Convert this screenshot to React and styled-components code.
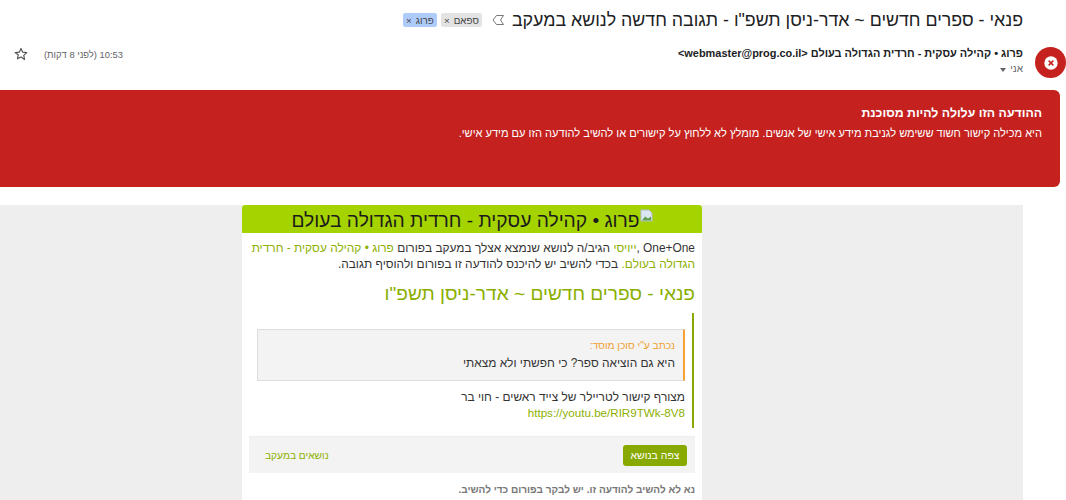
import React from "react";
import styled, { createGlobalStyle } from "styled-components";

const Global = createGlobalStyle`
  html, body { margin: 0; padding: 0; background: #fff; }
  body { font-family: "Liberation Sans", Arial, sans-serif; }
  #root { width: 1066px; height: 500px; overflow: hidden; }
`;
const Page = styled.div`
  width: 1066px; height: 500px; overflow: hidden; direction: rtl; background: #fff;
`;
const SubjectRow = styled.div`
  display: flex; align-items: center; gap: 7px; height: 40px; padding-right: 43px;
`;
const Subject = styled.h1`
  margin: 0; font-size: 17.8px; font-weight: 400; color: #202124; white-space: nowrap; line-height: 24px;
`;
const Labels = styled.div`display: flex; gap: 4px; margin-right: 2px;`;
const Label = styled.span`
  display: inline-flex; align-items: center; justify-content: center; gap: 4px; height: 14px; width: ${p => p.$w}px;
  font-size: 9.8px; border-radius: 2px; color: #444; background: ${p => p.$bg};
`;
const SenderRow = styled.div`
  display: flex; align-items: flex-start; height: 50px;
  padding: 5px 0 0 0; box-sizing: border-box; gap: 12px;
`;
const Avatar = styled.div`
  width: 31px; height: 31px; border-radius: 50%; background: #c5221f; flex: none;
  display: flex; align-items: center; justify-content: center; margin-top: 2px;
`;
const SenderCol = styled.div`flex: 1;`;
const SenderName = styled.div`
  font-size: 10.95px; font-weight: 700; color: #202124; line-height: 16px; white-space: nowrap;
`;
const ToLine = styled.div`
  font-size: 10px; line-height: 14px; color: #5f6368; display: flex; align-items: center; gap: 4px; margin-top: 1px;
`;
const Caret = styled.span`
  width: 0; height: 0; border-left: 3.5px solid transparent; border-right: 3.5px solid transparent;
  border-top: 4px solid #5f6368; margin-top: 2px;
`;
const Meta = styled.div`
  display: flex; align-items: center; gap: 16px; padding: 1px 0 0 14px; height: 16px;
  font-size: 9.4px; color: #5f6368; white-space: nowrap;
`;
const Danger = styled.section`
  width: 1060px; height: 97px; box-sizing: border-box; background: #c5221f; color: #fff;
  border-top-right-radius: 6px; border-bottom-right-radius: 6px;
  padding: 14px 18px 0 0; margin-right: 6px;
`;
const DangerTitle = styled.div`font-size: 12.3px; font-weight: 700; line-height: 18px;`;
const DangerText = styled.div`font-size: 11.05px; line-height: 16px; margin-top: 3px; white-space: nowrap;`;
const Canvas = styled.div`
  width: 1023px; margin-top: 18px; margin-right: 43px; height: 295px; background: #eeeeee; padding-right: 321px; box-sizing: border-box;
`;
const Card = styled.article`
  width: 460px; background: #fff; height: 295px;
`;
const CardHead = styled.div`
  background: #a5d300; height: 28px; box-sizing: border-box; padding-top: 3px; border-radius: 3px 3px 0 0;
  display: flex; justify-content: center; align-items: center;
  font-size: 19.2px; color: #1b1b1b; white-space: nowrap;
`;
const Broken = styled.svg`flex: none; align-self: flex-start; margin-top: 1px;`;
const Intro = styled.p`
  margin: 0; padding: 7px 7px 0 5px; font-size: 11.9px; line-height: 16px; color: #333;
`;
const Link = styled.a`color: #8db000; text-decoration: none;`;
const TopicTitle = styled.h2`
  margin: 0; padding: 11px 7px 0; font-size: 19.1px; font-weight: 400; color: #8aae00; line-height: 22px;
`;
const Post = styled.div`
  margin: 8px 8px 0 0; width: 437px; border-right: 2px solid #88aa00; height: 115px; padding: 16px 7px 0 0; box-sizing: border-box;
`;
const Quote = styled.blockquote`
  margin: 0; width: 428px; height: 52px; box-sizing: border-box; background: #f3f3f3;
  border: 1px solid #ddd; border-right: 2px solid #f6a234; padding: 8px 8px 0 0;
`;
const QuoteBy = styled.div`font-size: 10.2px; line-height: 15px; color: #f0a030;`;
const QuoteText = styled.div`font-size: 11.9px; line-height: 18px; color: #333; margin-top: 1px;`;
const Body = styled.div`
  font-size: 11.9px; line-height: 16px; color: #333; margin-top: 8px;
`;
const Url = styled.a`font-size: 11.6px; color: #8db000;`;
const Footer = styled.div`
  margin: 8px 7px 0; height: 37px; background: #f3f3f3; display: flex; justify-content: space-between; align-items: center;
  padding: 0 8px 0 16px; box-sizing: border-box; border-top: 1px solid #eee;
`;
const Button = styled.button`
  border: 0; height: 21px; width: 64px; background: #88aa00; color: #fff; border-radius: 3px; font: 10.5px "Liberation Sans", sans-serif;
`;
const FooterLink = styled.a`font-size: 10.2px; color: #8db000;`;
const Note = styled.p`
  margin: 10px 7px 0; font-size: 10.05px; font-weight: 700; line-height: 14px; color: #777; white-space: nowrap;
`;

export default function App() {
  return (
    <Page>
      <Global />
      <SubjectRow>
        <Subject>פנאי - ספרים חדשים ~ אדר-ניסן תשפ"ו - תגובה חדשה לנושא במעקב</Subject>
        <svg width="14" height="12" viewBox="0 0 14 12" fill="none" stroke="#777" strokeWidth="1">
          <path d="M12.500 1.500H5.500L2 6l3.500 4.500h7L9.500 6z" />
        </svg>
        <Labels>
          <Label $w={41} $bg="#e3e3e3">ספאם <span>×</span></Label>
          <Label $w={34} $bg="#aecbfa">פרוג <span>×</span></Label>
        </Labels>
      </SubjectRow>
      <SenderRow>
        <Avatar>
          <svg width="14" height="14" viewBox="0 0 13 13">
            <circle cx="6.500" cy="6.500" r="6.200" fill="#fff" />
            <path d="M4.300 4.300l4.400 4.400M8.700 4.300l-4.400 4.400" stroke="#c5221f" strokeWidth="1.400" />
          </svg>
        </Avatar>
        <SenderCol>
          <SenderName>פרוג • קהילה עסקית - חרדית הגדולה בעולם &lt;webmaster@prog.co.il&gt;</SenderName>
          <ToLine>אני <Caret /></ToLine>
        </SenderCol>
        <Meta>
          <span>10:53 (לפני 8 דקות)</span>
          <svg width="14" height="14" viewBox="0 0 24 24" fill="none" stroke="#555" strokeWidth="2" strokeLinejoin="round">
            <path d="M12 2.500l2.900 6.400 7 .8-5.200 4.700 1.400 6.900L12 17l-6.100 3.300 1.400-6.900L2.100 9.700l7-.8z" />
          </svg>
        </Meta>
      </SenderRow>
      <Danger>
        <DangerTitle>ההודעה הזו עלולה להיות מסוכנת</DangerTitle>
        <DangerText>היא מכילה קישור חשוד ששימש לגניבת מידע אישי של אנשים. מומלץ לא ללחוץ על קישורים או להשיב להודעה הזו עם מידע אישי.</DangerText>
      </Danger>
      <Canvas>
        <Card>
          <CardHead>
            <Broken width="13" height="13" viewBox="0 0 13 13">
              <path d="M1 1h8l3 3v8H1z" fill="#dbe6f4" stroke="#b4bfcc" strokeWidth="1" />
              <path d="M2 11.500l3-4 3 2 3-2v4z" fill="#5da04e" />
            </Broken>
            <span>פרוג • קהילה עסקית - חרדית הגדולה בעולם</span>
          </CardHead>
          <Intro>
            One+One ,<Link>ייויסי</Link> הגיב/ה לנושא שנמצא אצלך במעקב בפורום <Link>פרוג • קהילה עסקית - חרדית הגדולה בעולם.</Link> בכדי להשיב יש להיכנס להודעה זו בפורום ולהוסיף תגובה.
          </Intro>
          <TopicTitle>פנאי - ספרים חדשים ~ אדר-ניסן תשפ"ו</TopicTitle>
          <Post>
            <Quote>
              <QuoteBy>נכתב ע"י סוכן מוסד:</QuoteBy>
              <QuoteText>היא גם הוציאה ספר? כי חפשתי ולא מצאתי</QuoteText>
            </Quote>
            <Body>
              מצורף קישור לטריילר של צייד ראשים - חוי בר<br />
              <Url>https://youtu.be/RIR9TWk-8V8</Url>
            </Body>
          </Post>
          <Footer>
            <Button>צפה בנושא</Button>
            <FooterLink>נושאים במעקב</FooterLink>
          </Footer>
          <Note>נא לא להשיב להודעה זו. יש לבקר בפורום כדי להשיב.</Note>
        </Card>
      </Canvas>
    </Page>
  );
}
